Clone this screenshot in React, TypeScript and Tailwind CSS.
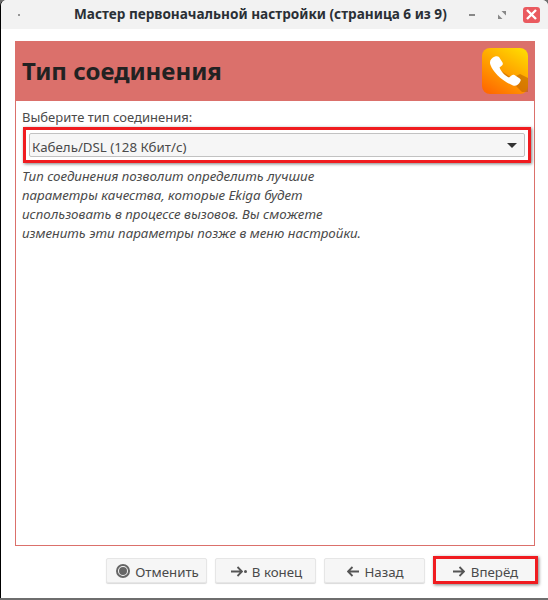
const FONT = "font-['Noto_Sans','Open_Sans',sans-serif]";

function PhoneIcon() {
  return (
    <svg width="46" height="46" viewBox="0 0 46 46">
      <defs>
        <linearGradient id="tile" x1="0.8" y1="0" x2="0.2" y2="1">
          <stop offset="0" stopColor="#ffd800" />
          <stop offset="1" stopColor="#ff6a00" />
        </linearGradient>
      </defs>
      <rect width="46" height="46" rx="8" fill="url(#tile)" />
      <path d="M18 22 L40 44 L46 44 L46 30 L38 26 L30 30 Z" fill="#b85f00" opacity="0.55" />
      <path
        d="M13 8.500 C9 10 7 13 8.500 17 C11 24 20 33 31 37.500 C34 38.500 37 36.500 38.500 33 C39 31.500 38.500 31 37 30 L32.500 27 C31.500 26.400 30.500 26.500 29.500 27.500 L27 29.500 C23 28 19 23.500 17.500 19.500 L20 17.500 C21 16.500 21 15.500 20.500 14.500 L17 9 C16 8 14.500 8 13 8.500 Z"
        fill="#fff"
      />
    </svg>
  );
}

function Btn({ icon, label, highlight }: { icon: React.ReactNode; label: string; highlight?: boolean }) {
  if (highlight) {
    return (
      <div className="w-[105px] h-[28px] border-[3px] border-[#f01c20] shadow-[1px_1px_3px_rgba(0,0,0,0.5)] flex items-center justify-center gap-[6px] bg-[#f6f6f6] text-[13.300px] text-[#4a4a4a]">
        <span className="mt-[2px] flex items-center">{icon}</span>
        <span className="mt-[5px]">{label}</span>
      </div>
    );
  }
  return (
    <div className="w-[101px] h-[25px] rounded-[2px] border border-[#e6e6e6] shadow-[0_1px_1px_rgba(0,0,0,0.15)] flex items-center justify-center gap-[5px] pl-[2px] bg-[#f6f6f6] text-[13.300px] text-[#4a4a4a]">
      <span className="mt-[2px] flex items-center">{icon}</span>
      <span className="mt-[5px]">{label}</span>
    </div>
  );
}

function Arrow({ dir }: { dir: 'left' | 'right' }) {
  return (
    <svg width="12" height="11" viewBox="0 0 12 11" fill="none" stroke="#555" strokeWidth="1.800">
      {dir === 'right' ? <path d="M0 5.500 H11 M6.500 1 L11 5.500 L6.500 10" /> : <path d="M12 5.500 H1 M5.500 1 L1 5.500 L5.500 10" />}
    </svg>
  );
}

export default function App() {
  return (
    <div className={`${FONT} w-[548px] h-[600px] bg-[#6e6e6e] flex flex-col overflow-hidden`}>
      <div className="h-[598px] bg-white border-l border-black rounded-t-[6px] flex flex-col overflow-hidden">
        <div className="h-[29px] shrink-0 bg-[#f2f2f2] flex items-center pl-[17px]">
          <span className="w-[2px] h-[2px] shrink-0 rounded-full bg-[#777]" />
          <span className="ml-[54px] shrink-0 font-bold text-[13.600px] text-[#2a2f35] whitespace-nowrap w-[383px]">
            Мастер первоначальной настройки (страница 6 из 9)
          </span>
          <span className="ml-[12px] shrink-0 w-[6px] h-[2px] bg-[#888]" />
          <svg className="ml-[23px] shrink-0" width="8" height="8" viewBox="0 0 8 8" fill="#888">
            <path d="M8 0 V4.500 L3.500 0 Z M0 8 V3.500 L4.500 8 Z" />
          </svg>
          <div className="ml-[17px] shrink-0 w-[17px] h-[16px] rounded-[3px] bg-[#ea5a5f] flex items-center justify-center">
            <svg width="11" height="11" viewBox="0 0 11 11" stroke="#fff" strokeWidth="2.400">
              <path d="M1 1 L10 10 M10 1 L1 10" />
            </svg>
          </div>
        </div>

        <div className="mt-[12px] ml-[14px] w-[520px] h-[505px] border border-[#db706b] flex flex-col">
          <div className="h-[60px] shrink-0 bg-[#db706b] -mx-px -mt-px flex items-center justify-between pl-[7px] pr-[7px]">
            <span className="font-bold text-[24px] text-[#222]">Тип соединения</span>
            <PhoneIcon />
          </div>
          <div className="pl-[6px] pt-[7px]">
            <div className="text-[13px] leading-[18px] text-[#4a4a4a]">Выберите тип соединения:</div>
            <div className="mt-[1px] ml-[1px] w-[508px] h-[36px] border-[3px] border-[#f01c20] shadow-[1px_1px_3px_rgba(0,0,0,0.5)] px-[3px] py-[3px] bg-white">
              <div className="h-[24px] rounded-[2px] border border-[#c2c2c2] bg-[#f6f6f6] flex items-center justify-between pl-[2px] pr-[7px] text-[13.300px] text-[#4a4a4a]">
                <span className="mt-[5px]">Кабель/DSL (128 Кбит/с)</span>
                <span className="w-0 h-0 border-x-[5px] border-x-transparent border-t-[5px] border-t-[#333]" />
              </div>
            </div>
            <p className="mt-[4px] italic text-[13.350px] leading-[19px] text-[#4a4a4a]">
              Тип соединения позволит определить лучшие
              <br />
              параметры качества, которые Ekiga будет
              <br />
              использовать в процессе вызовов. Вы сможете
              <br />
              изменить эти параметры позже в меню настройки.
            </p>
          </div>
        </div>

        <div className="mt-[10px] pl-[105px] flex items-center gap-[8px]">
          <Btn
            label="Отменить"
            icon={
              <span className="w-[14px] h-[14px] rounded-full border-2 border-[#666] flex items-center justify-center">
                <span className="w-[8px] h-[8px] rounded-full bg-[#666]" />
              </span>
            }
          />
          <Btn
            label="В конец"
            icon={
              <span className="flex items-center gap-[1px]">
                <Arrow dir="right" />
                <span className="w-[3px] h-[3px] rounded-full bg-[#555]" />
              </span>
            }
          />
          <Btn label="Назад" icon={<Arrow dir="left" />} />
          <Btn label="Вперёд" highlight icon={<Arrow dir="right" />} />
        </div>
      </div>
    </div>
  );
}
